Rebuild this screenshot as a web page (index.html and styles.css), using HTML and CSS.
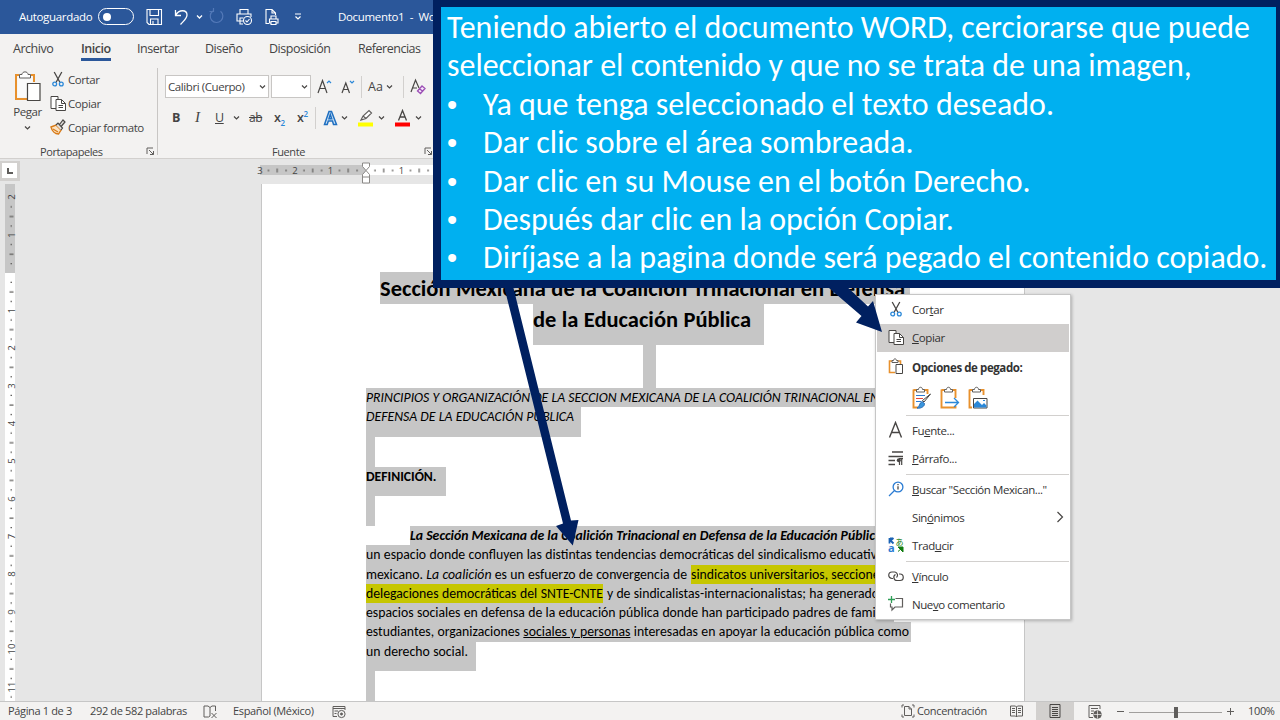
FILE: index.html
```html
<!DOCTYPE html>
<html lang="es">
<head>
<meta charset="utf-8">
<title>Documento1 - Word</title>
<link rel="stylesheet" href="styles.css">
</head>
<body>
<svg class="defs" width="0" height="0">
  <defs>
    <g id="scissors" fill="none"><path d="M4.2 1 L10 11.5 M11.8 1 L6 11.5" stroke="#484644" stroke-width="1.3"/><circle cx="4.7" cy="13" r="1.9" stroke="#2b88d8" stroke-width="1.3"/><circle cx="11.3" cy="13" r="1.9" stroke="#2b88d8" stroke-width="1.3"/></g>
    <g id="copy" fill="#fff" stroke="#484644"><path d="M6 13.5 H1 V1.5 H8 V4"/><path d="M6 4.500 H11.500 L15.500 8.500 V15.500 H6 Z"/><path d="M11.500 4.500 V8.500 H15.500 M8.500 10.500 H13 M8.500 12.500 H13" fill="none"/></g>
    <path id="chev" d="M1 1.500 L3.500 4 L6 1.500" fill="none" stroke="#484644" stroke-width="1.200"/>
    <path id="launch" d="M1 7 V1 H7 M3 3 L7.500 7.500 M7.500 4 V7.500 H4" fill="none" stroke="#605e5c"/>
  </defs>
</svg>

<header class="titlebar">
  <span>Autoguardado</span>
  <span class="toggle"></span>
  <svg width="17" height="18" viewBox="0 0 17 18" fill="none" stroke="#fff" stroke-width="1.100"><path d="M1 1.500 H15.500 V16.500 H3 L1 14.500 Z M4 1.500 V7.500 H12.500 V1.500 M4.500 16.500 V11 H12 V16.500 M7 16.500 V13"/></svg>
  <svg width="16" height="18" viewBox="0 0 16 18" fill="none" stroke="#fff" stroke-width="1.300"><path d="M1.500 2 V7.500 H7 M1.500 7.500 C5 1 13 1.500 13 7 C13 10.500 10 12.500 6.500 16.500"/></svg>
  <svg width="7" height="6" viewBox="0 0 7 6"><path d="M1 1.500 L3.500 4 L6 1.500" fill="none" stroke="#fff" stroke-width="1.300"/></svg>
  <svg width="16" height="17" viewBox="0 0 16 17" fill="none" stroke="#5379b8" stroke-width="1.200"><path d="M4 3 A6.300 6.300 0 1 0 11.500 3.300 M4.500 0 V3.500 H0.500"/></svg>
  <svg width="17" height="18" viewBox="0 0 17 18" fill="none" stroke="#fff" stroke-width="1.100"><path d="M4 6 V1.500 H12 V6 M7 13 H1 V6 H15 V9 M4 13 V10 H7.500 M4 13 V16 H7"/><circle cx="11.500" cy="12.500" r="4"/><path d="M9.500 12.500 L11 14 L13.500 11"/></svg>
  <svg width="15" height="18" viewBox="0 0 15 18" fill="none" stroke="#fff" stroke-width="1.100"><path d="M4 15.500 H1 V1.500 H7 L10.500 5 V7 M7 1.500 V5 H10.500 M6 11 V8 H11 V11 M6 15 H4.500 V11 H13 V15 H11 M6 13.500 H11 V16.500 H6 Z"/></svg>
  <svg width="8" height="8" viewBox="0 0 8 8" fill="none" stroke="#fff" stroke-width="1.200"><path d="M1 1 H7 M1.500 3.500 L4 6 L6.500 3.500"/></svg>
  <span>Documento1&nbsp; -&nbsp; Word</span>
</header>

<nav class="tabs">
  <span>Archivo</span>
  <span class="active">Inicio</span>
  <span>Insertar</span>
  <span>Diseño</span>
  <span>Disposición</span>
  <span>Referencias</span>
</nav>

<section class="ribbon">
  <div class="group clipboard">
    <div class="paste">
      <svg width="28" height="31" viewBox="0 0 28 31" fill="none"><path d="M5 4 H2 V28 H13 M17 4 H20 V11" stroke="#e8912d" stroke-width="2"/><path d="M3.500 5.500 H18.500 V11.500 H12.500 V26.500 H3.500 Z" fill="#fafafa"/><path d="M5.500 7 V3.500 H8 C8 0 14 0 14 3.500 H16.500 V7 Z" fill="#fff" stroke="#605e5c"/><path d="M13.500 12.500 H26 V29.500 H13.500 Z" fill="#fff" stroke="#484644" stroke-width="1.200"/></svg>
      <span>Pegar</span>
      <svg width="7" height="6"><use href="#chev"/></svg>
    </div>
    <ul class="clip-actions">
      <li><svg width="16" height="16" viewBox="0 0 16 16"><use href="#scissors"/></svg><span>Cortar</span></li>
      <li><svg width="16" height="17" viewBox="0 0 16 17"><use href="#copy"/></svg><span>Copiar</span></li>
      <li><svg width="16" height="16" viewBox="0 0 16 16"><path d="M1 8 L6 6 L11 11 L8.500 15 C5 15 2 12 1 8 Z" fill="#fbe3c4" stroke="#d87a16" stroke-width="1.400"/><path d="M3 10 L8 13" stroke="#d87a16" stroke-width="1.200"/><path d="M6 6 L8 4 L12.500 9 L11 11 M9.500 5.500 L13 1 L15 3 L11.500 7" fill="#e1dfdd" stroke="#484644" stroke-width="1.200"/></svg><span>Copiar formato</span></li>
    </ul>
    <footer class="group-name"><span>Portapapeles</span><svg width="9" height="9"><use href="#launch"/></svg></footer>
  </div>
  <div class="group font">
    <div class="font-row">
      <span class="combo"><span>Calibri (Cuerpo)</span><svg width="7" height="6"><use href="#chev"/></svg></span>
      <span class="combo size"><svg width="7" height="6"><use href="#chev"/></svg></span>
      <svg width="16" height="16" viewBox="0 0 16 16" fill="none" stroke="#484644" stroke-width="1.200"><path d="M1 14 L5.500 1.500 L10 14 M2.600 9.500 H8.400"/><path d="M10 4 L12 2 L14 4" stroke="#2b88d8"/></svg>
      <svg width="16" height="16" viewBox="0 0 16 16" fill="none" stroke="#484644" stroke-width="1.200"><path d="M1 14 L4.800 4 L8.500 14 M2.400 10.500 H7.200"/><path d="M9 2 L11 4 L13 2" stroke="#2b88d8"/></svg>
      <i class="bar"></i>
      <span class="aa">Aa</span>
      <svg width="7" height="6"><use href="#chev"/></svg>
      <i class="bar"></i>
      <svg width="17" height="18" viewBox="0 0 17 18" fill="none"><path d="M1 14 L5.500 2 L9 10 M2.600 10 H7" stroke="#484644" stroke-width="1.200"/><path d="M7.500 13 L12 8 L15 10.500 L10.500 15.500 Z M9.500 10.800 L12.700 13.300" stroke="#9b4fb5" stroke-width="1.300" fill="#f6e6fa"/></svg>
    </div>
    <div class="format-row">
      <b>B</b><em>I</em><u>U</u><svg width="7" height="6"><use href="#chev"/></svg><s>ab</s>
      <span class="x">x<sub>2</sub></span><span class="x">x<sup>2</sup></span><i class="bar"></i>
      <svg width="15" height="16" viewBox="0 0 15 16"><path d="M1.500 14.500 L6 1.500 H8.500 L13.500 14.500 H10.500 L9.500 11 H5.300 L4.200 14.500 Z M6 8.700 H8.700 L7.300 4.500 Z" fill="#cfe4f7" stroke="#1f6fc0" stroke-width="1.500"/></svg>
      <svg width="7" height="6"><use href="#chev"/></svg>
      <svg width="16" height="18" viewBox="0 0 16 18"><path d="M0 13.500 H15 V17.500 H0 Z" fill="#ff0"/><path d="M3 11 L5 7 L11 1.500 L13.500 4 L8 9.500 Z M5 7 L8 9.500" fill="#fff" stroke="#605e5c" stroke-width="1.200"/></svg>
      <svg width="7" height="6"><use href="#chev"/></svg>
      <svg width="15" height="18" viewBox="0 0 15 18"><path d="M0 13.500 H15 V17.500 H0 Z" fill="#f00"/><path d="M3.500 11.500 L7.500 1.500 L11.500 11.500 M5 8 H10" fill="none" stroke="#484644" stroke-width="1.300"/></svg>
      <svg width="7" height="6"><use href="#chev"/></svg>
    </div>
    <footer class="group-name"><span>Fuente</span><svg width="9" height="9"><use href="#launch"/></svg></footer>
  </div>
</section>

<main class="workspace">
  <aside class="left-rail">
    <span class="tab-stop"><svg width="15" height="15" viewBox="0 0 15 15"><path d="M6 5 V10 H11" fill="none" stroke="#605e5c" stroke-width="2"/></svg></span>
    <svg class="v-ruler" width="12" height="517" viewBox="0 184 12 517">
      <defs><pattern id="vt" x="0" y="273" width="10" height="37.700" patternUnits="userSpaceOnUse"><path d="M5.500 9.400 h1.500 M4.500 18.900 h4 M5.500 28.300 h1.500" stroke="#605e5c" stroke-width="1.200"/></pattern></defs>
      <path d="M0 184 H10 V273 H0 Z" fill="#c6c6c6"/><path d="M0 273 H10 V701 H0 Z" fill="#fff"/><path d="M0 203 H10 V701 H0 Z" fill="url(#vt)"/>
      <g class="ruler-text">
        <text transform="translate(9.500 197) rotate(-90)">2</text><text transform="translate(9.500 235) rotate(-90)">1</text>
        <text transform="translate(9.500 310.500) rotate(-90)">1</text><text transform="translate(9.500 348) rotate(-90)">2</text><text transform="translate(9.500 386) rotate(-90)">3</text><text transform="translate(9.500 423.500) rotate(-90)">4</text><text transform="translate(9.500 461) rotate(-90)">5</text><text transform="translate(9.500 499) rotate(-90)">6</text><text transform="translate(9.500 536.500) rotate(-90)">7</text><text transform="translate(9.500 574) rotate(-90)">8</text><text transform="translate(9.500 612) rotate(-90)">9</text><text transform="translate(9.500 649) rotate(-90)">10</text><text transform="translate(9.500 687) rotate(-90)">11</text>
      </g>
    </svg>
  </aside>
  <div class="sheet-column">
    <svg class="h-ruler" width="764" height="25" viewBox="256 159 764 25">
      <defs><pattern id="ht" x="366" y="0" width="35.500" height="184" patternUnits="userSpaceOnUse"><path d="M9 169.500 v2 M17.700 168.500 v4 M26.600 169.500 v2" stroke="#605e5c" stroke-width="1.200"/></pattern></defs>
      <path d="M260 165 H366 V175 H260 Z" fill="#c6c6c6"/><path d="M366 165 H1020 V175 H366 Z" fill="#fff"/><path d="M264 165 H1020 V175 H264 Z" fill="url(#ht)"/>
      <g class="ruler-text"><text x="260" y="174">3</text><text x="295" y="174">2</text><text x="330.500" y="174">1</text><text x="401.500" y="174">1</text></g>
      <path d="M362.500 163 H369.500 V166.500 L366 170.500 L362.500 166.500 Z M366 170.500 L369.500 174.500 V183 H362.500 V174.500 Z M362.500 177 H369.500" fill="#fff" stroke="#8a8886"/>
    </svg>
    <article class="page">
      <h1 class="row r-title1"><span class="sel">Sección Mexicana de la Coalición Trinacional en Defensa</span></h1>
      <h1 class="row r-title2"><span class="sel">de la Educación Pública</span></h1>
      <div class="row r-gap1"><span class="sel"></span></div>
      <div class="row r-p1"><span class="sel">PRINCIPIOS Y ORGANIZACIÓN DE LA SECCION MEXICANA DE LA COALICIÓN TRINACIONAL EN</span></div>
      <div class="row r-p2"><span class="sel">DEFENSA DE LA EDUCACIÓN PÚBLICA</span></div>
      <div class="row r-gap2"><span class="sel"></span></div>
      <h2 class="row r-def"><span class="sel">DEFINICIÓN.</span></h2>
      <div class="row r-gap2"><span class="sel"></span></div>
      <div class="row r-b1"><span class="sel">La Sección Mexicana de la Coalición Trinacional en Defensa de la Educación Pública</span></div>
      <div class="row r-b2"><span class="sel">un espacio donde confluyen las distintas tendencias democráticas del sindicalismo educativo</span></div>
      <div class="row r-b3"><span class="sel lead">mexicano. <em>La coalición</em> es un esfuerzo de convergencia de</span><span class="sel mark">sindicatos universitarios, secciones</span></div>
      <div class="row r-b4"><span class="sel mark">delegaciones democráticas del SNTE-CNTE</span><span class="sel rest">y de sindicalistas-internacionalistas; ha generado</span></div>
      <div class="row r-b5"><span class="sel">espacios sociales en defensa de la educación pública donde han participado padres de familia,</span></div>
      <div class="row r-b6"><span class="sel">estudiantes, organizaciones <u>sociales y personas</u> interesadas en apoyar la educación pública como</span></div>
      <div class="row r-b7"><span class="sel">un derecho social.</span></div>
      <div class="row r-gap2"><span class="sel"></span></div>
    </article>
  </div>
</main>

<footer class="statusbar">
  <span>Página 1 de 3</span>
  <span>292 de 582 palabras</span>
  <svg width="15" height="14" viewBox="0 0 15 14" fill="none" stroke="#605e5c"><path d="M7 11 L5.500 12 H1 V1 H5 L7 2.500 L9 1 H12.500 V6 M7 2.500 V11 M8.500 8 L13.500 13 M13.500 8 L8.500 13"/></svg>
  <span>Español (México)</span>
  <svg width="14" height="14" viewBox="0 0 14 14" fill="none" stroke="#605e5c"><path d="M5 11.500 H1 V1.500 H13 V5 M1 3.500 H13 M2.500 6 H6 M2.500 8.500 H4.500"/><circle cx="9.500" cy="9" r="3.600"/><circle cx="9.500" cy="9" r="1" fill="#605e5c"/></svg>
  <span class="focus"><svg width="14" height="14" viewBox="0 0 14 14" fill="none" stroke="#605e5c"><path d="M3 1 H1 V3.500 M11 1 H13 V3.500 M1 10.500 V13 H3 M13 10.500 V13 H11 M3.500 2.500 H8 L10.500 5 V11.500 H3.500 Z M8 2.500 V5 H10.500"/></svg><span>Concentración</span></span>
  <svg width="13" height="13" viewBox="0 0 13 13" fill="none" stroke="#605e5c"><path d="M6.500 2 L5.500 1 H.500 V11 H5.500 L6.500 12 L7.500 11 H12.500 V1 H7.500 Z V12 M2 3.500 H5 M2 5.500 H5 M2 7.500 H5 M8 3.500 H11 M8 5.500 H11 M8 7.500 H11"/></svg>
  <span class="view-on"><svg width="12" height="14" viewBox="0 0 12 14" fill="none" stroke="#484644"><path d="M1 .500 H11 V13.500 H1 Z M3 3.500 H9 M3 5.500 H9 M3 7.500 H9 M3 9.500 H9 M3 11.500 H9"/></svg></span>
  <svg width="14" height="14" viewBox="0 0 14 14" fill="none" stroke="#605e5c"><path d="M5 12.500 H1 V.500 H12 V4 M3 3.500 H10 M3 6 H6 M3 8.500 H5"/><circle cx="9.500" cy="9.500" r="3.800" fill="#605e5c"/><path d="M5.500 9.500 H13.500 M9.500 5.500 V13.500" stroke="#f3f2f1" stroke-width=".7"/></svg>
  <svg width="120" height="14" viewBox="0 0 120 14" fill="none" stroke="#605e5c"><path d="M0 6.500 H7 M110 6.500 H117 M113.500 3 V10"/><path d="M12 7.500 H105" stroke="#a19f9d"/><path d="M57 2 H61 V13 H57 Z" fill="#605e5c" stroke="none"/></svg>
  <span>100%</span>
</footer>

<div class="context-menu">
  <div class="item"><svg width="16" height="16" viewBox="0 0 16 16"><use href="#scissors"/></svg><span>Cor<u>t</u>ar</span></div>
  <div class="item on"><svg width="16" height="17" viewBox="0 0 16 17"><use href="#copy"/></svg><span><u>C</u>opiar</span></div>
  <div class="item paste-head"><svg width="16" height="18" viewBox="0 0 16 18"><path d="M4 3 H1.500 V14.500 H7 M10 3 H12.500 V6" fill="none" stroke="#e8912d" stroke-width="1.600"/><path d="M4 4.500 V2.500 H5.500 C5.500 .3 8.500 .3 8.500 2.500 H10 V4.500 Z" fill="#fff" stroke="#605e5c"/><path d="M8 6.500 H14.500 V15.500 H8 Z" fill="#fff" stroke="#484644"/></svg><span>Opciones de pegado:</span></div>
  <div class="paste-options">
    <svg width="20" height="24" viewBox="0 0 20 24"><path d="M1.500 4 H5 M12 4 H15.500 V8 M1.500 3.500 V21.500 H6" fill="none" stroke="#e8912d" stroke-width="1.900"/><path d="M4.500 6 V3.500 H6.500 C6.500 .5 10.500 .5 10.500 3.500 H12.500 V6 Z" fill="#fff" stroke="#605e5c"/><path d="M4 9.500 H13 M4 15.500 H9" stroke="#2b7cd3"/><path d="M4 12.500 H11" stroke="#e3453a"/><path d="M18.500 8 L12 16 L10.500 14.500 Z" fill="#fff" stroke="#484644"/><path d="M5 22 C8 21 7 17 10 15.500 L12.500 17.500 C13 20 9 23 5 22 Z" fill="#3a96dd" stroke="#2b6cb3"/></svg>
    <svg width="20" height="24" viewBox="0 0 20 24"><path d="M1.500 4 H5 M12 4 H15.500 V12 M1.500 3.500 V21.500 H15.500 V20" fill="none" stroke="#e8912d" stroke-width="1.900"/><path d="M4.500 6 V3.500 H6.500 C6.500 .5 10.500 .5 10.500 3.500 H12.500 V6 Z" fill="#fff" stroke="#605e5c"/><path d="M5 16.500 H18.500 M14 12 L18.500 16.500 L14 21" fill="none" stroke="#2b88d8" stroke-width="1.300"/></svg>
    <svg width="20" height="24" viewBox="0 0 20 24"><path d="M1.500 4 H5 M12 4 H15.500 V9 M1.500 3.500 V21.500 H4" fill="none" stroke="#e8912d" stroke-width="1.900"/><path d="M4.500 6 V3.500 H6.500 C6.500 .5 10.500 .5 10.500 3.500 H12.500 V6 Z" fill="#fff" stroke="#605e5c"/><path d="M5.500 12.500 H19 V22 H5.500 Z" fill="#fff" stroke="#484644"/><path d="M6 21.500 V18 L9.500 14.500 L14 19 L16 17 L18.500 19.500 V21.500 Z" fill="#2b88d8"/><path d="M15 14.500 h2" stroke="#2b88d8"/></svg>
  </div>
  <hr>
  <div class="item"><svg width="16" height="18" viewBox="0 0 16 18"><path d="M1.500 16.500 L7.500 1.500 L13.500 16.500 M3.600 11.500 H11.400" fill="none" stroke="#484644" stroke-width="1.400"/></svg><span>Fu<u>e</u>nte...</span></div>
  <div class="item"><svg width="16" height="16" viewBox="0 0 16 16"><path d="M4 2 H15 M.5 6.500 H15 M.5 10.500 H7 M.5 14.500 H7" stroke="#484644" stroke-width="1.300"/><path d="M11.500 15 V9 M13.700 15 V9 M15 8.600 H11" stroke="#484644" stroke-width="1.200"/><circle cx="10.800" cy="10.300" r="2" fill="#484644"/></svg><span><u>P</u>árrafo...</span></div>
  <hr>
  <div class="item"><svg width="16" height="16" viewBox="0 0 16 16" fill="none" stroke="#2b7cd3" stroke-width="1.300"><circle cx="10" cy="6" r="4.900" fill="#fff"/><path d="M6.500 9.500 L1 15"/><path d="M10 5.300 V8.500 M10 3 V4.200" stroke="#484644"/></svg><span><u>B</u>uscar "Sección Mexican..."</span></div>
  <div class="item"><i></i><span>Sin<u>ó</u>nimos</span><svg width="8" height="12" viewBox="0 0 8 12"><path d="M1.500 1 L6.500 6 L1.500 11" fill="none" stroke="#484644" stroke-width="1.200"/></svg></div>
  <div class="item"><svg class="tr" width="16" height="16" viewBox="0 0 16 16"><path d="M1.500 1 V6.500 M2 4 L5.500 1 M2 3 L5.500 6.500 M2 1.500 H5" stroke="#1b63b5" stroke-width="1.800"/><text x="0" y="15" fill="#2b7cd3" class="tr-a">a</text><text x="7.500" y="7.500" fill="#107c10" class="tr-j">あ</text><path d="M10 10 H15 V15 Z M10 14.500 L14 11" fill="#107c10" stroke="#107c10"/></svg><span>Trad<u>u</u>cir</span></div>
  <hr>
  <div class="item"><svg width="16" height="14" viewBox="0 0 16 14" fill="none" stroke="#484644" stroke-width="1.200"><path d="M5 9.500 H4 A3.200 3.200 0 0 1 4 3 H7 A3.200 3.200 0 0 1 8.500 8.500"/><path d="M11 5 H12 A3.200 3.200 0 0 1 12 11.500 H9 A3.200 3.200 0 0 1 7.500 5.500"/></svg><span><u>V</u>ínculo</span></div>
  <div class="item"><svg width="16" height="16" viewBox="0 0 16 16" fill="none"><path d="M7.500 2.500 H14.500 V11 H7 L4 14 V11 H2.500 V7.500" stroke="#605e5c" stroke-width="1.200"/><path d="M3.500 0 V7 M0 3.500 H7" stroke="#2f9e57" stroke-width="1.300"/></svg><span>Nue<u>v</u>o comentario</span></div>
</div>

<svg class="arrows" width="1280" height="720" viewBox="0 0 1280 720">
  <path d="M503.500 284 L512.500 284 L571 520.500 L578.500 520 L572.800 545.500 L556 526 L563 523.500 Z" fill="#002060"/>
  <path d="M832 284 L844 284 L868 306.500 L873 301 L882 332 L856 322.500 L861.500 316 L829 288 Z" fill="#002060"/>
</svg>

<section class="callout">
  <p>Teniendo abierto el documento WORD, cerciorarse que puede</p>
  <p>seleccionar el contenido y que no se trata de una imagen,</p>
  <ul>
    <li><span>Ya que tenga seleccionado el texto deseado.</span></li>
    <li><span>Dar clic sobre el área sombreada.</span></li>
    <li><span>Dar clic en su Mouse en el botón Derecho.</span></li>
    <li><span>Después dar clic en la opción Copiar.</span></li>
    <li><span>Diríjase a la pagina donde será pegado el contenido copiado.</span></li>
  </ul>
</section>
</body>
</html>
```
FILE: styles.css
```css
* { box-sizing: border-box; }
body { position: relative; width: 1280px; height: 720px; margin: 0; overflow: hidden; display: flex; flex-direction: column; background: #e6e6e6; color: #444; font-family: "Open Sans", "Noto Sans", sans-serif; font-size: 11.5px; letter-spacing: -.42px; white-space: nowrap; }
svg { display: block; flex: none; }
h1, h2, p, ul { margin: 0; padding: 0; list-style: none; }
.defs { position: absolute; }

.titlebar { height: 34px; flex: none; padding: 0 0 1px 19px; display: grid; grid-template-columns: 79px 48px 28px 22px 13px 27px 29px 29px 44px auto; align-items: center; background: #2b579a; color: #fff; letter-spacing: -.32px; }
.toggle { width: 36px; height: 17px; border: 1px solid #fff; border-radius: 9px; }
.toggle::before { content: ""; display: block; width: 8px; height: 8px; margin: 3.5px; border-radius: 50%; background: #fff; }

.tabs { height: 31px; flex: none; padding-left: 13px; display: grid; grid-template-columns: 68px 56px 68px 64px 89px 64px; justify-items: start; background: #f3f2f1; font-size: 12.5px; letter-spacing: -.48px; line-height: 30px; }
.tabs span { height: 27px; }
.tabs .active { font-weight: 600; border-bottom: 3px solid #2b579a; }

.ribbon { height: 94px; flex: none; display: flex; background: #f3f2f1; border-bottom: 1px solid #d2d0ce; }
.group { display: grid; padding-top: 3px; }
.clipboard { position: relative; width: 158px; grid-template: 75px 16px / 50px 1fr; }
.clipboard::after { content: ""; position: absolute; right: 0; top: 3px; height: 87px; border-right: 1px solid #c8c6c4; }
.paste { display: flex; flex-direction: column; align-items: center; padding: 3px 0 0 5px; line-height: 20px; }
.paste svg:last-child { margin-top: 3px; }
.clip-actions { margin-top: -1px; }
.clip-actions li { display: flex; align-items: center; gap: 2px; height: 24px; }
.group-name { grid-column: 1 / -1; display: flex; align-items: center; font-size: 11px; }
.clipboard .group-name { padding-left: 40px; }
.clipboard .group-name span { width: 106px; }
.font { width: 276px; grid-template: 37px 31px 23px / 1fr; }
.font .group-name { padding: 7px 0 0 114px; }
.font .group-name span { width: 152px; }
.font-row { display: grid; grid-template-columns: 106px 46px 24px 20px 7px 18px 17px 7px 17px; padding-left: 7px; align-items: center; }
.combo { width: 104px; height: 23px; border: 1px solid #c8c6c4; background: #fff; display: flex; align-items: center; justify-content: space-between; padding: 0 2px; }
.size { width: 40px; justify-content: flex-end; }
.bar { width: 1px; height: 22px; background: #d2d0ce; }
.aa { font-size: 12.5px; letter-spacing: 0; }
.format-row { display: grid; grid-template-columns: 23px 20px 18px 16px 25px 23px 18px 8px 18px 17px 20px 17px 20px 8px; padding: 0 0 6px 14px; align-items: center; font-size: 12.5px; }
.format-row em { font-family: "Liberation Serif", serif; font-size: 15px; }
.format-row s { font-size: 12px; }
.x { font-weight: 600; }
.x sub, .x sup { font-size: 8px; color: #2b88d8; line-height: 0; }

.workspace { height: 542px; flex: none; display: flex; }
.left-rail { width: 256px; padding-top: 2px; }
.tab-stop { display: block; width: 20px; height: 20px; border: solid #d2d0ce; border-width: 2px 3px 3px 2px; background: #fff; margin-bottom: 3px; }
.v-ruler { margin-left: 5px; overflow: visible; }
.ruler-text { font: 9.5px "Open Sans", sans-serif; fill: #444; text-anchor: middle; letter-spacing: 0; }
.page { width: 764px; height: 517px; margin-left: 5px; padding: 88px 0 0 104px; background: #fff; border: 1px solid #c6c6c6; border-width: 0 1px; color: #000; font-family: Carlito, Lato, "Liberation Sans", sans-serif; font-size: 13.75px; letter-spacing: 0; }
.row { display: flex; height: 19.3px; }
.sel { display: block; background: #c6c6c6; line-height: 19px; text-align: left; text-align-last: justify; white-space: nowrap; }
.page h1 { font-size: 22.5px; font-weight: 700; }
.r-title1 { height: 32px; padding-left: 14px; }
.r-title1 .sel { width: 530px; padding-right: 5px; line-height: 33px; }
.r-title2 { height: 41px; padding-left: 167px; }
.page .r-title2 .sel { width: 231px; padding-right: 13px; line-height: 31px; }
.r-gap1 { height: 43px; padding-left: 277px; }
.r-gap1 .sel { width: 13px; }
.r-p1, .r-p2 { height: 19px; font-style: italic; }
.r-p1 .sel { width: 511px; }
.r-p2 { height: 30px; }
.r-p2 .sel { width: 215px; padding-right: 7px; }
.r-gap2 { height: 30px; }
.r-gap2 .sel { width: 9px; }
.page h2 { height: 29px; font-size: 13.65px; }
.r-def .sel { width: 80px; padding-right: 9px; }
.r-b1 { padding-left: 44px; font-weight: 700; font-style: italic; }
.r-b1 .sel { width: 472px; }
.r-b2 .sel { width: 518px; }
.r-b3 .lead { width: 325px; padding-right: 4px; }
.r-b3 .mark { width: 192px; }
.r-b4 .mark { width: 237px; }
.r-b4 .rest { width: 276px; padding-left: 4px; }
.mark { background: #c6c600; }
.r-b5 .sel { width: 528px; padding-right: 2px; }
.r-b6 .sel { width: 545px; padding-right: 2px; }
.r-b7 { height: 29px; }
.r-b7 .sel { width: 110px; padding-right: 8px; }

.statusbar { height: 19px; flex: none; display: grid; grid-template-columns: 82px 113px 30px 99px 569px 109px 26px 52px 29px 131px auto; padding-left: 8px; align-items: center; background: #f3f2f1; border-top: 1px solid #c6c6c6; font-size: 11px; letter-spacing: -.35px; line-height: 18px; }
.statusbar > svg { margin-top: 1px; }
.focus { display: flex; gap: 2px; align-items: center; }
.view-on { width: 38px; height: 18px; background: #d2d0ce; display: grid; place-items: center; }

.context-menu { position: absolute; left: 875px; top: 294px; width: 196px; height: 326px; padding-top: 1px; background: #fff; border: 1px solid #c6c6c6; box-shadow: 1px 1px 3px rgba(0,0,0,.25); color: #333; }
.item { height: 28px; display: grid; grid-template-columns: 24px 1fr auto; padding: 0 6px 2px 12px; align-items: center; }
.item.on { background: #d0cecd; margin: 0 1px; padding-left: 11px; }
.item.paste-head { height: 30px; padding-bottom: 0; font-weight: 700; }
.paste-options { height: 32px; padding-left: 36px; display: flex; gap: 8px; align-items: center; }
hr { margin: 1px 1px 1px 30px; border: 0; border-top: 1px solid #d2d0ce; }
.tr { overflow: visible; }
.tr-a { font: bold 11px "Open Sans", sans-serif; }
.tr-j { font: 8px "Noto Sans CJK JP", sans-serif; }

.arrows { position: absolute; left: 0; top: 0; }
.callout { position: absolute; left: 433px; top: 0; width: 847px; height: 288px; padding: 2px 0 0 6px; background: #00b0f0; border: 8px solid #002060; border-width: 7px 4px 8px 8px; color: #fff; font: 31.95px/38.4px Carlito, Lato, sans-serif; letter-spacing: 0; }
.callout li { display: grid; grid-template-columns: 36px 1fr; }
.callout li::before { content: "•"; font-family: "Liberation Sans", sans-serif; font-size: 29px; }
```
